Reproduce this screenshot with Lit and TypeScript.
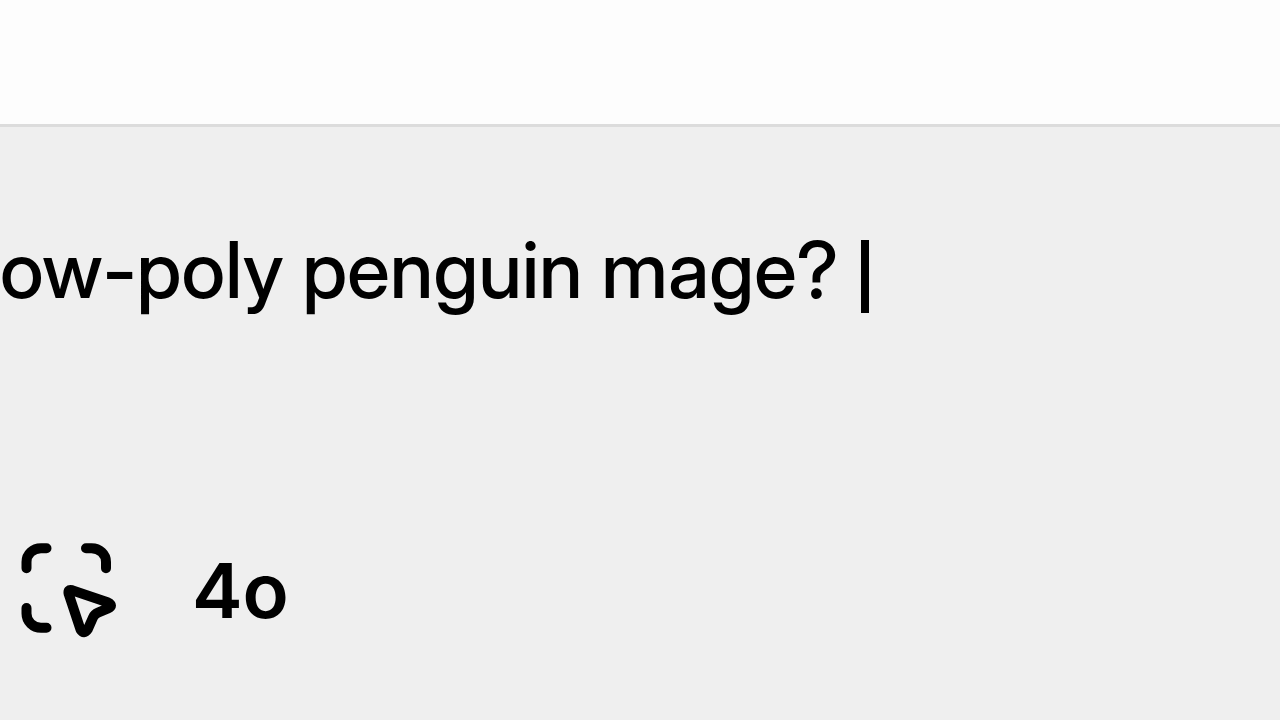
import { LitElement, html, css } from "lit";
import { customElement, property } from "lit/decorators.js";

@customElement("select-area-icon")
class SelectAreaIcon extends LitElement {
  static styles = css`
    :host {
      display: block;
    }
    svg {
      display: block;
      width: 96px;
      height: 96px;
      fill: none;
      stroke: #000;
      stroke-width: 10;
      stroke-linecap: round;
      stroke-linejoin: round;
    }
  `;

  render() {
    return html`
      <svg viewBox="20 542 96 96" aria-hidden="true">
        <path d="M26.5 568.3V562C26.5 554 33 548.3 41 548.3H46.5" />
        <path d="M86 548.3H91.5C99.5 548.3 106 554 106 562V568.3" />
        <path d="M26.5 608V613.5C26.5 621.5 33 627.8 41 627.8H46.5" />
        <path
          d="M72 590.2L107.5 602.2Q114.5 605.5 107.5 608.7L98 612.7Q94.5 614.2 93 617.5L87.8 629.3Q84 635 80.5 629.5L68.7 594Q67.5 589 72 590.2Z"
        />
      </svg>
    `;
  }
}

@customElement("app-root")
class AppRoot extends LitElement {
  @property() prompt = "ow-poly penguin mage?";
  @property() model = "4o";

  static styles = css`
    :host {
      display: flex;
      flex-direction: column;
      min-height: 100vh;
      overflow: hidden;
      background: #fdfdfd;
      color: #000;
      font-family: Inter, sans-serif;
    }
    .page {
      height: 124px;
    }
    .composer {
      flex: 1;
      box-sizing: border-box;
      border-top: 3px solid #dcdcdc;
      background: #efefef;
      padding-top: 93px;
    }
    .prompt {
      display: flex;
      align-items: flex-start;
      gap: 22px;
    }
    input {
      field-sizing: content;
      margin: 0;
      padding: 0;
      border: 0;
      outline: 0;
      background: none;
      color: inherit;
      font: 530 78px/100px "Inter Display", Inter, sans-serif;
      font-variation-settings: "opsz" 32;
    }
    .caret {
      width: 8px;
      height: 73px;
      margin-top: 20px;
      background: #000;
    }
    .tools {
      display: flex;
      align-items: center;
      gap: 76px;
      padding: 222px 20px 0;
    }
    button {
      margin: 0;
      padding: 0;
      border: 0;
      background: none;
      color: inherit;
      font: 560 76px/96px Inter, sans-serif;
      cursor: pointer;
    }
  `;

  render() {
    return html`
      <div class="page"></div>
      <section class="composer">
        <div class="prompt">
          <input
            type="text"
            aria-label="Prompt"
            spellcheck="false"
            .value=${this.prompt}
          />
          <span class="caret"></span>
        </div>
        <div class="tools">
          <button type="button" aria-label="Select area">
            <select-area-icon></select-area-icon>
          </button>
          <button type="button">${this.model}</button>
        </div>
      </section>
    `;
  }
}
